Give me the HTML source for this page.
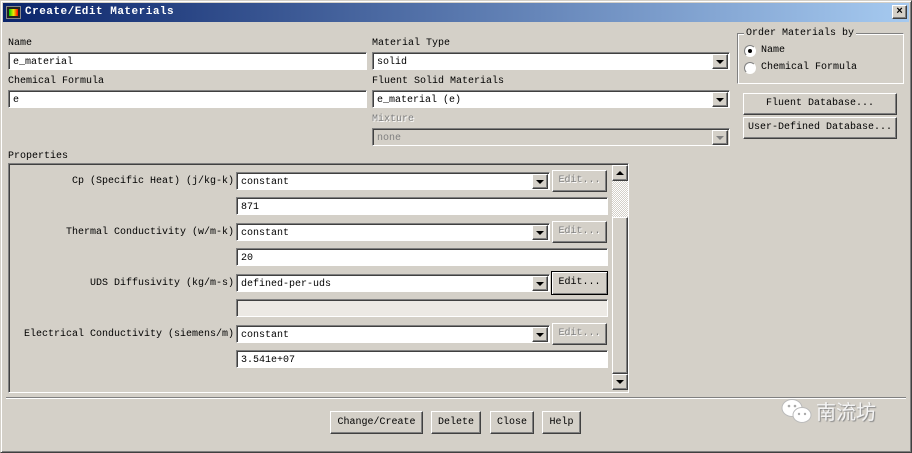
<!DOCTYPE html>
<html><head><style>
*{margin:0;padding:0;box-sizing:border-box}
body{width:912px;height:453px;background:#d4d0c8;font-family:"Liberation Mono","Noto Sans CJK SC",monospace;font-size:10px;color:#000;position:relative;overflow:hidden}
.a{position:absolute}
.win{left:0;top:0;width:912px;height:453px;border:1px solid;border-color:#d4d0c8 #404040 #404040 #d4d0c8;box-shadow:inset 1px 1px #fff,inset -1px -1px #808080}
.title{left:3px;top:3px;width:906px;height:19px;background:linear-gradient(to right,#0a246a,#a6caf0);color:#fff;font-weight:bold;font-size:11px;line-height:19px;padding-left:22px;letter-spacing:0.5px}
.lbl{line-height:10px;white-space:nowrap;top:0}
.fld{background:#fff;border:1px solid;border-color:#808080 #fff #fff #808080;box-shadow:inset 1px 1px #404040;padding-left:4px;padding-top:2px;line-height:15px;white-space:nowrap}
.dis{background:#d4d0c8;color:#808080}
.btn{background:#d4d0c8;border:1px solid;border-color:#fff #404040 #404040 #fff;box-shadow:inset -1px -1px #808080;text-align:center;white-space:nowrap}
.arr{position:absolute;right:1px;top:1px;width:16px;height:15px;background:#d4d0c8;border:1px solid;border-color:#fff #404040 #404040 #fff;box-shadow:inset -1px -1px #808080}
.arr:after{content:"";position:absolute;left:3px;top:5px;border-left:4px solid transparent;border-right:4px solid transparent;border-top:4px solid #000}
.arr.g:after{border-top-color:#808080}
.rl{right:678px;text-align:right}
.gt{color:#808080;text-shadow:1px 1px #fff}
</style></head><body>
<div class="a win"></div>
<div class="a title">Create/Edit Materials</div>
<div class="a" style="left:6px;top:6px;width:15px;height:13px;background:#222;border:1px solid #888"><div style="margin:2px;height:7px;background:linear-gradient(90deg,#0c0,#ee0,#f00)"></div></div>
<div class="a btn" style="left:892px;top:5px;width:15px;height:14px;line-height:12px;font-size:11px;font-weight:bold">×</div>

<div class="a lbl" style="left:8px;top:39px">Name</div>
<div class="a fld" style="left:8px;top:52px;width:359px;height:18px">e_material</div>
<div class="a lbl" style="left:8px;top:77px">Chemical Formula</div>
<div class="a fld" style="left:8px;top:90px;width:359px;height:18px">e</div>

<div class="a lbl" style="left:372px;top:39px">Material Type</div>
<div class="a fld" style="left:372px;top:52px;width:358px;height:18px">solid<div class="arr"></div></div>
<div class="a lbl" style="left:372px;top:77px">Fluent Solid Materials</div>
<div class="a fld" style="left:372px;top:90px;width:358px;height:18px">e_material (e)<div class="arr"></div></div>
<div class="a lbl gt" style="left:372px;top:115px">Mixture</div>
<div class="a fld dis" style="left:372px;top:128px;width:358px;height:18px">none<div class="arr g"></div></div>

<div class="a" style="left:737px;top:33px;width:167px;height:51px;border:1px solid;border-color:#808080 #fff #fff #808080;box-shadow:inset 1px 1px #fff,1px 1px #808080 inset"></div>
<div class="a lbl" style="left:744px;top:29px;background:#d4d0c8;padding:0 2px">Order Materials by</div>
<div class="a" style="left:744px;top:45px;width:12px;height:12px;border-radius:50%;background:#fff;border:1px solid;border-color:#808080 #fff #fff #808080"><div style="margin:3px;width:4px;height:4px;border-radius:50%;background:#000"></div></div>
<div class="a lbl" style="left:761px;top:46px">Name</div>
<div class="a" style="left:744px;top:62px;width:12px;height:12px;border-radius:50%;background:#fff;border:1px solid;border-color:#808080 #fff #fff #808080"></div>
<div class="a lbl" style="left:761px;top:63px">Chemical Formula</div>
<div class="a btn" style="left:743px;top:93px;width:154px;height:22px;line-height:19px">Fluent Database...</div>
<div class="a btn" style="left:743px;top:117px;width:154px;height:22px;line-height:19px">User-Defined Database...</div>

<div class="a lbl" style="left:8px;top:152px">Properties</div>
<div class="a" style="left:8px;top:163px;width:621px;height:230px;border:1px solid;border-color:#808080 #fff #fff #808080;box-shadow:inset 1px 1px #404040"></div>

<div class="a lbl rl" style="top:177px">Cp (Specific Heat) (j/kg-k)</div>
<div class="a fld" style="left:236px;top:172px;width:314px;height:18px">constant<div class="arr"></div></div>
<div class="a btn gt" style="left:552px;top:170px;width:55px;height:22px;line-height:20px">Edit...</div>
<div class="a fld" style="left:236px;top:197px;width:372px;height:18px">871</div>

<div class="a lbl rl" style="top:228px">Thermal Conductivity (w/m-k)</div>
<div class="a fld" style="left:236px;top:223px;width:314px;height:18px">constant<div class="arr"></div></div>
<div class="a btn gt" style="left:552px;top:221px;width:55px;height:22px;line-height:20px">Edit...</div>
<div class="a fld" style="left:236px;top:248px;width:372px;height:18px">20</div>

<div class="a lbl rl" style="top:279px">UDS Diffusivity (kg/m-s)</div>
<div class="a fld" style="left:236px;top:274px;width:314px;height:18px">defined-per-uds<div class="arr"></div></div>
<div class="a btn" style="left:551px;top:271px;width:57px;height:24px;line-height:22px;border:1px solid #000;box-shadow:inset 1px 1px #fff,inset -1px -1px #808080">Edit...</div>
<div class="a fld dis" style="left:236px;top:299px;width:372px;height:18px;background:#ece9e4"></div>

<div class="a lbl rl" style="top:330px">Electrical Conductivity (siemens/m)</div>
<div class="a fld" style="left:236px;top:325px;width:314px;height:18px">constant<div class="arr"></div></div>
<div class="a btn gt" style="left:552px;top:323px;width:55px;height:22px;line-height:20px">Edit...</div>
<div class="a fld" style="left:236px;top:350px;width:372px;height:18px">3.541e+07</div>

<div class="a" style="left:612px;top:165px;width:16px;height:226px;background:#d4d0c8"></div>
<div class="a" style="left:612px;top:181px;width:16px;height:36px;background:repeating-conic-gradient(#fff 0 25%,#d4d0c8 0 50%) 0 0/2px 2px"></div>
<div class="a btn" style="left:612px;top:165px;width:16px;height:16px"><div style="position:absolute;left:3px;top:5px;border-left:4px solid transparent;border-right:4px solid transparent;border-bottom:4px solid #000"></div></div>
<div class="a btn" style="left:612px;top:217px;width:16px;height:157px"></div>
<div class="a btn" style="left:612px;top:374px;width:16px;height:16px"><div style="position:absolute;left:3px;top:5px;border-left:4px solid transparent;border-right:4px solid transparent;border-top:4px solid #000"></div></div>

<div class="a" style="left:6px;top:397px;width:900px;height:2px;border-top:1px solid #808080;border-bottom:1px solid #fff"></div>

<div class="a btn" style="left:330px;top:411px;width:93px;height:23px;line-height:21px">Change/Create</div>
<div class="a btn" style="left:431px;top:411px;width:50px;height:23px;line-height:21px">Delete</div>
<div class="a btn" style="left:490px;top:411px;width:44px;height:23px;line-height:21px">Close</div>
<div class="a btn" style="left:542px;top:411px;width:39px;height:23px;line-height:21px">Help</div>

<svg class="a" style="left:780px;top:397px" width="34" height="30"><ellipse cx="12" cy="11" rx="10" ry="8.5" fill="#fff" stroke="#bbb"/><ellipse cx="22" cy="18" rx="9" ry="7.5" fill="#fff" stroke="#bbb"/><circle cx="9" cy="9" r="1.3" fill="#aaa"/><circle cx="15" cy="9" r="1.3" fill="#aaa"/><circle cx="19" cy="17" r="1.2" fill="#aaa"/><circle cx="25" cy="17" r="1.2" fill="#aaa"/></svg>
<div class="a" style="left:816px;top:399px;font-family:'Noto Sans CJK SC',sans-serif;font-size:20px;line-height:24px;color:#f4f4f4;text-shadow:1px 1px 1px #888">南流坊</div>
</body></html>
